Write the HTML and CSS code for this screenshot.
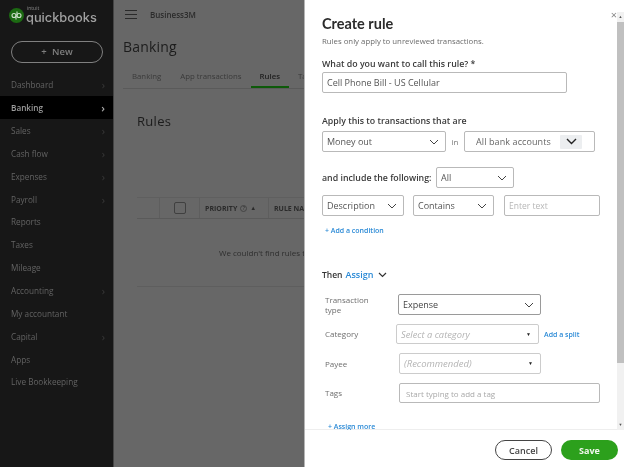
FILE: index.html
```html
<!DOCTYPE html>
<html lang="en">
<head>
<meta charset="utf-8">
<title>Create rule</title>
<link rel="stylesheet" href="styles.css">
</head>
<body>
<div class="app">
  <aside class="sidebar">
    <div class="logo">
      <svg class="logo-mark" width="15" height="15" viewBox="0 0 15 15"><circle cx="7.5" cy="7.5" r="7.5" fill="#1c6a12"/><circle cx="5" cy="7.5" r="2" fill="none" stroke="#cfe0cc" stroke-width="1.1"/><circle cx="10" cy="7.5" r="2" fill="none" stroke="#cfe0cc" stroke-width="1.1"/><path d="M7 7.5v4M8 3.5v4" stroke="#cfe0cc" stroke-width="1.1"/></svg>
      <div class="wordmark"><span class="intuit">intuit</span><span class="qb">quickbooks</span></div>
    </div>
    <div class="new-btn"><span class="plus">+</span> New</div>
    <nav class="nav">
      <div class="nav-item">Dashboard<span class="chev">›</span></div>
      <div class="nav-item active">Banking<span class="chev">›</span></div>
      <div class="nav-item">Sales<span class="chev">›</span></div>
      <div class="nav-item">Cash flow<span class="chev">›</span></div>
      <div class="nav-item">Expenses<span class="chev">›</span></div>
      <div class="nav-item">Payroll<span class="chev">›</span></div>
      <div class="nav-item">Reports</div>
      <div class="nav-item">Taxes</div>
      <div class="nav-item">Mileage</div>
      <div class="nav-item">Accounting<span class="chev">›</span></div>
      <div class="nav-item">My accountant</div>
      <div class="nav-item">Capital<span class="chev">›</span></div>
      <div class="nav-item">Apps</div>
      <div class="nav-item">Live Bookkeeping</div>
    </nav>
  </aside>
  <main class="main">
    <div class="topbar">
      <svg width="12" height="9" viewBox="0 0 12 9"><path d="M0 .5h12M0 4.500h12M0 8.500h12" stroke="#2a2a2a" stroke-width="1"/></svg>
      <span class="company">Business3M</span>
    </div>
    <h1 class="page-title">Banking</h1>
    <div class="tabs">
      <span class="tab">Banking</span>
      <span class="tab">App transactions</span>
      <span class="tab current">Rules</span>
      <span class="tab">Tags</span>
    </div>
    <h2 class="rules-title">Rules</h2>
    <div class="table-head">
      <div class="th th-a"></div>
      <div class="th th-b"><span class="checkbox"></span></div>
      <div class="th th-c">PRIORITY <span class="help">?</span> <span class="sort">▲</span></div>
      <div class="th th-d">RULE NAME</div>
    </div>
    <div class="empty">We couldn't find rules to display</div>
  </main>
</div>
<section class="panel">
  <div class="panel-scroll">
    <button class="close">×</button>
    <h2 class="panel-title">Create rule</h2>
    <p class="hint">Rules only apply to unreviewed transactions.</p>
    <label class="label name-label">What do you want to call this rule? *</label>
    <div class="field name-field">Cell Phone Bill - US Cellular</div>
    <label class="label apply-label">Apply this to transactions that are</label>
    <div class="row apply-row">
      <div class="field select w-money">Money out<svg class="caret" width="10" height="6" viewBox="0 0 10 6"><path d="M1 1l4 4 4-4" fill="none" stroke="#444" stroke-width="1"/></svg></div>
      <span class="in">in</span>
      <div class="field w-bank"><span class="bank-text">All bank accounts</span><span class="bank-btn"><svg width="11" height="7" viewBox="0 0 11 7"><path d="M1 1l4.500 4.500L10 1" fill="none" stroke="#222" stroke-width="1.400"/></svg></span></div>
    </div>
    <div class="row include-row">
      <span class="label inline">and include the following:</span>
      <div class="field select w-all">All<svg class="caret" width="10" height="6" viewBox="0 0 10 6"><path d="M1 1l4 4 4-4" fill="none" stroke="#444" stroke-width="1"/></svg></div>
    </div>
    <div class="row cond-row">
      <div class="field select w-desc">Description<svg class="caret" width="10" height="6" viewBox="0 0 10 6"><path d="M1 1l4 4 4-4" fill="none" stroke="#444" stroke-width="1"/></svg></div>
      <div class="field select w-cont">Contains<svg class="caret" width="10" height="6" viewBox="0 0 10 6"><path d="M1 1l4 4 4-4" fill="none" stroke="#444" stroke-width="1"/></svg></div>
      <div class="field placeholder w-text">Enter text</div>
    </div>
    <a class="link add-cond">+ Add a condition</a>
    <div class="then"><span>Then</span> <a class="assign">Assign</a><svg width="9" height="6" viewBox="0 0 9 6"><path d="M1 1l3.500 3.500L8 1" fill="none" stroke="#333" stroke-width="1.200"/></svg></div>
    <div class="assign-grid">
      <div class="assign-row r-type">
        <span class="row-label two-line">Transaction<br>type</span>
        <div class="field select strong w-type">Expense<svg class="caret" width="10" height="6" viewBox="0 0 10 6"><path d="M1 1l4 4 4-4" fill="none" stroke="#444" stroke-width="1"/></svg></div>
      </div>
      <div class="assign-row r-cat">
        <span class="row-label">Category</span>
        <div class="field select italic light w-cat">Select a category<span class="tri">▼</span></div>
        <a class="link split">Add a split</a>
      </div>
      <div class="assign-row r-payee">
        <span class="row-label">Payee</span>
        <div class="field select italic light w-payee">(Recommended)<span class="tri">▼</span></div>
      </div>
      <div class="assign-row r-tags">
        <span class="row-label">Tags</span>
        <div class="field placeholder small w-tags">Start typing to add a tag</div>
      </div>
    </div>
    <a class="link assign-more">+ Assign more</a>
    <div class="scrollbar">
      <span class="sb-up">▲</span>
      <span class="sb-thumb"></span>
      <span class="sb-down">▼</span>
    </div>
  </div>
  <footer class="panel-foot">
    <button class="btn cancel">Cancel</button>
    <button class="btn save">Save</button>
  </footer>
</section>
</body>
</html>
```
FILE: styles.css
```css
* { box-sizing: border-box; }
html, body { margin: 0; height: 100%; }
body {
  width: 624px;
  height: 467px;
  overflow: hidden;
  position: relative;
  font-family: "Open Sans", "Noto Sans", sans-serif;
  color: #333;
  filter: blur(0.45px);
}
.app { display: flex; width: 624px; height: 467px; }

.sidebar { width: 114px; flex: none; background: #171717; border-right: 1px solid #444; color: #7c7c7c; }
.logo { display: flex; gap: 2px; padding: 8px 0 0 9px; height: 41px; align-items: flex-start; }
.wordmark { display: flex; flex-direction: column; color: #a0a0a0; line-height: 1; margin-top: -2px; }
.intuit { font-size: 5px; margin-left: 1px; height: 5px; line-height: 5px; color: #8f8f8f; }
.qb { font-family: "Inter", sans-serif; font-size: 12.800px; font-weight: 500; line-height: 13px; }
.new-btn {
  margin-left: 11px; width: 92px; height: 22px;
  border: 1px solid #808080; border-radius: 11px;
  text-align: center; font-size: 9.500px; line-height: 19px; color: #7f7f7f; font-weight: 600;
}
.plus { margin-right: 3px; }
.nav { margin-top: 10.500px; }
.nav-item {
  height: 22.850px; display: flex; justify-content: space-between; align-items: center;
  padding: 0 8px 0 11px; font-size: 8.200px; color: #636363; font-weight: 500;
}
.nav-item.active { background: #000; color: #9c9c9c; font-weight: 600; }
.chev { font-size: 11px; line-height: 1; color: #3a3a3a; }
.active .chev { color: #aaa; }

.main { flex: 1; background: #676767; overflow: hidden; color: #222; padding-left: 9px; }
.topbar { display: flex; align-items: center; gap: 13px; height: 28px; padding-left: 2px; }
.company { font-size: 8px; color: #2b2b2b; font-weight: 600; }
.page-title { margin: 9px 0 0; font-size: 14px; line-height: 20px; font-weight: 500; color: #1c1c1c; letter-spacing: 0.2px; }
.tabs { display: flex; gap: 19px; margin-top: 10px; height: 22px; padding-left: 9px; border-bottom: 1px solid #5a5a5a; width: 260px; }
.tab { font-size: 7.800px; color: #3a3a3a; line-height: 18px; white-space: nowrap; height: 21px; font-weight: 500; }
.tab.current { color: #1f1f1f; font-weight: 600; box-shadow: 0 2px 0 #0e5a0a; padding: 0 9px; margin-inline: -10px; height: 19px; }
.rules-title { margin: 22px 0 0 14px; font-size: 13px; line-height: 20px; font-weight: 500; color: #1c1c1c; letter-spacing: 0.3px; }
.table-head { display: flex; margin: 66px 0 0 14px; height: 22px; border-top: 1px solid #5f5f5f; border-bottom: 1px solid #5a5a5a; width: 260px; }
.th { height: 20px; flex: none; display: flex; align-items: center; border-right: 1px solid #5e5e5e; font-size: 7px; font-weight: 700; color: #2b2b2b; white-space: nowrap; }
.th-a { width: 23px; }
.th-b { width: 40px; justify-content: center; }
.th-c { width: 69px; padding-left: 5px; gap: 3px; }
.th-d { width: 60px; padding-left: 5px; border: 0; }
.checkbox { width: 12px; height: 12px; border: 1px solid #404040; border-radius: 2px; }
.help { width: 7px; height: 7px; border: 1px solid #444; border-radius: 50%; font-size: 5px; line-height: 5px; text-align: center; font-weight: 400; }
.sort { font-size: 6px; }
.empty { margin: 26px 0 0 14px; font-size: 8px; line-height: 16px; color: #2e2e2e; white-space: nowrap; padding: 0 0 25px 82px; border-bottom: 1px solid #5e5e5e; width: 260px; }

.panel { position: absolute; left: 304px; top: 0; width: 320px; height: 467px; background: #fff; display: flex; flex-direction: column; border-left: 1px solid #b5b5b5; }
.panel-scroll { position: relative; height: 430px; flex: none; overflow: hidden; padding: 14px 0 0 17px; }
.close { position: absolute; left: 305px; top: 9px; padding: 0; border: 0; background: none; color: #888; font-size: 11px; line-height: 11px; width: 8px; font-family: inherit; }
.panel-title { margin: 0; font-family: "Lato", sans-serif; font-size: 14.500px; line-height: 19px; font-weight: 700; color: #2b2b2b; }
.hint { margin: 2px 0 0; font-size: 7.800px; line-height: 12px; color: #6b6b6b; }
.label { display: block; font-size: 8.800px; line-height: 12px; font-weight: 600; color: #3a3a3a; }
.name-label { margin-top: 11px; }
.field {
  height: 21px; border: 1px solid #b9b9b9; border-radius: 2px; font-size: 9px; line-height: 19px;
  color: #555; padding-left: 4px; display: flex; align-items: center; justify-content: space-between; flex: none; background: #fff; white-space: nowrap;
}
.name-field { margin-top: 2px; width: 245px; }
.apply-label { margin-top: 22px; }
.row { display: flex; align-items: center; }
.apply-row { margin-top: 4px; }
.caret { margin-right: 6px; flex: none; }
.w-money { width: 124px; }
.in { width: 18px; text-align: center; font-size: 8px; color: #777; }
.w-bank { width: 131px; padding-left: 11px; justify-content: flex-start; color: #666; font-size: 9px; }
.bank-text { width: 84px; letter-spacing: 0.1px; }
.bank-btn { width: 22px; height: 14px; background: #eceef0; display: flex; align-items: center; justify-content: center; border-radius: 1px; }
.include-row { margin-top: 15px; gap: 4px; }
.inline { white-space: nowrap; width: 110px; }
.w-all { width: 78px; }
.cond-row { margin-top: 7px; }
.w-desc { width: 82px; }
.w-cont { width: 81px; margin-left: 9px; }
.w-text { width: 96px; margin-left: 10px; }
.placeholder { color: #b6b6b6; font-size: 8.500px; }
.link { color: #2b8ad6; font-size: 7px; font-weight: 600; text-decoration: none; white-space: nowrap; }
.add-cond { display: block; margin: 8px 0 0 3px; line-height: 14px; }
.then { margin-top: 30px; display: flex; align-items: center; gap: 3px; font-size: 8.500px; font-weight: 600; line-height: 14px; color: #333; }
.assign { color: #2b8ad6; font-size: 9px; }
.assign + svg { margin-left: 2px; }
.assign-grid { margin-top: 12px; display: flex; flex-direction: column; }
.assign-row { display: flex; align-items: center; position: relative; }
.row-label { width: 76px; padding-left: 3px; flex: none; font-size: 8px; line-height: 10px; color: #6e6e6e; }
.r-type { height: 21px; }
.r-cat { height: 20px; margin-top: 9px; }
.r-payee { height: 21px; margin-top: 9px; }
.r-tags { height: 20px; margin-top: 9px; }
.r-cat .field { margin-left: -2px; }
.r-payee .field, .r-tags .field { margin-left: 1px; }
.strong { border-color: #9a9a9a; }
.w-type { width: 143px; color: #444; }
.w-cat { width: 143px; height: 20px; font-size: 9.300px; }
.w-payee { width: 142px; font-size: 9.500px; }
.w-tags { width: 201px; padding-left: 6px; font-size: 8px; color: #a9a9a9; height: 20px; }
.italic { font-style: italic; }
.light { color: #b4b4b4; border-color: #ccc; }
.tri { font-style: normal; font-size: 5px; color: #222; margin-right: 7px; }
.split { margin-left: 5px; }
.assign-more { display: block; margin: 18px 0 0 6px; line-height: 12px; }
.scrollbar { position: absolute; right: 0; top: 12px; bottom: 0; width: 7px; background: #f1f1f1; display: flex; flex-direction: column; align-items: center; }
.sb-up, .sb-down { font-size: 4px; line-height: 10px; height: 10px; color: #555; flex: none; }
.sb-thumb { flex: none; width: 7px; height: 341px; background: #c0c0c0; }
.sb-down { margin-top: auto; }
.panel-foot { flex: 1; display: flex; justify-content: flex-end; align-items: center; gap: 9px; padding: 3px 6px 0 0; background: #fff; box-shadow: 0 -1px 0 #eee; }
.btn { width: 57px; height: 20px; border-radius: 10px; padding: 0; font-family: inherit; font-size: 9px; font-weight: 700; }
.cancel { background: #fff; border: 1.500px solid #444; color: #444; font-weight: 600; }
.save { background: #2ca01c; border: 0; color: #f2f7ee; }
```
